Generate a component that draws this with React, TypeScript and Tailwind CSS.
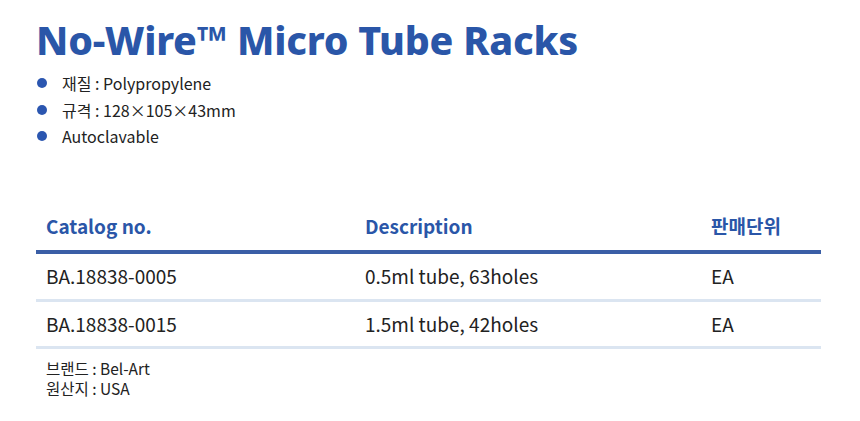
const specs = ["재질 : Polypropylene", "규격 : 128×105×43mm", "Autoclavable"]

const rows = [
  { no: "BA.18838-0005", desc: "0.5ml tube, 63holes", unit: "EA", h: "h-[49px]" },
  { no: "BA.18838-0015", desc: "1.5ml tube, 42holes", unit: "EA", h: "h-[47px]" },
]

const kr = "font-['Noto_Sans_CJK_KR','Noto_Sans',sans-serif]"

export default function App() {
  return (
    <div className={`w-[860px] h-[421px] bg-white overflow-hidden ${kr} text-[#222]`}>
      <div className="pl-[36px] pr-[40px] pt-[14px]">
        <h1 className="font-['Noto_Sans','Noto_Sans_CJK_KR',sans-serif] font-extrabold text-[39.3px] leading-[52px] text-[#2a56a8] tracking-[-0.2px]">
          No-Wire™ Micro Tube Racks
        </h1>

        <ul className="mt-[4px] flex flex-col">
          {specs.map((s) => (
            <li key={s} className="flex items-center h-[26.5px] text-[16px]">
              <span className="w-[10px] h-[10px] rounded-full bg-[#2b56b0] ml-[1px] mr-[15px]" />
              {s}
            </li>
          ))}
        </ul>

        <table className="mt-[54px] w-[785px] border-collapse text-[19px]">
          <thead>
            <tr className="border-b-[4px] border-[#3a5ea6] text-[#2a56a8]">
              <th className="text-left font-bold h-[48px] pl-[10px] w-[329px]">Catalog no.</th>
              <th className="text-left font-bold w-[346px]">Description</th>
              <th className="text-left font-bold">판매단위</th>
            </tr>
          </thead>
          <tbody>
            {rows.map((r) => (
              <tr key={r.no} className="border-b-[3px] border-[#dbe5f1]">
                <td className={`${r.h} pl-[10px]`}>{r.no}</td>
                <td>{r.desc}</td>
                <td>{r.unit}</td>
              </tr>
            ))}
          </tbody>
        </table>

        <div className="mt-[9px] pl-[10px] text-[15.5px] leading-[20px]">
          <p>브랜드 : Bel-Art</p>
          <p>원산지 : USA</p>
        </div>
      </div>
    </div>
  )
}
